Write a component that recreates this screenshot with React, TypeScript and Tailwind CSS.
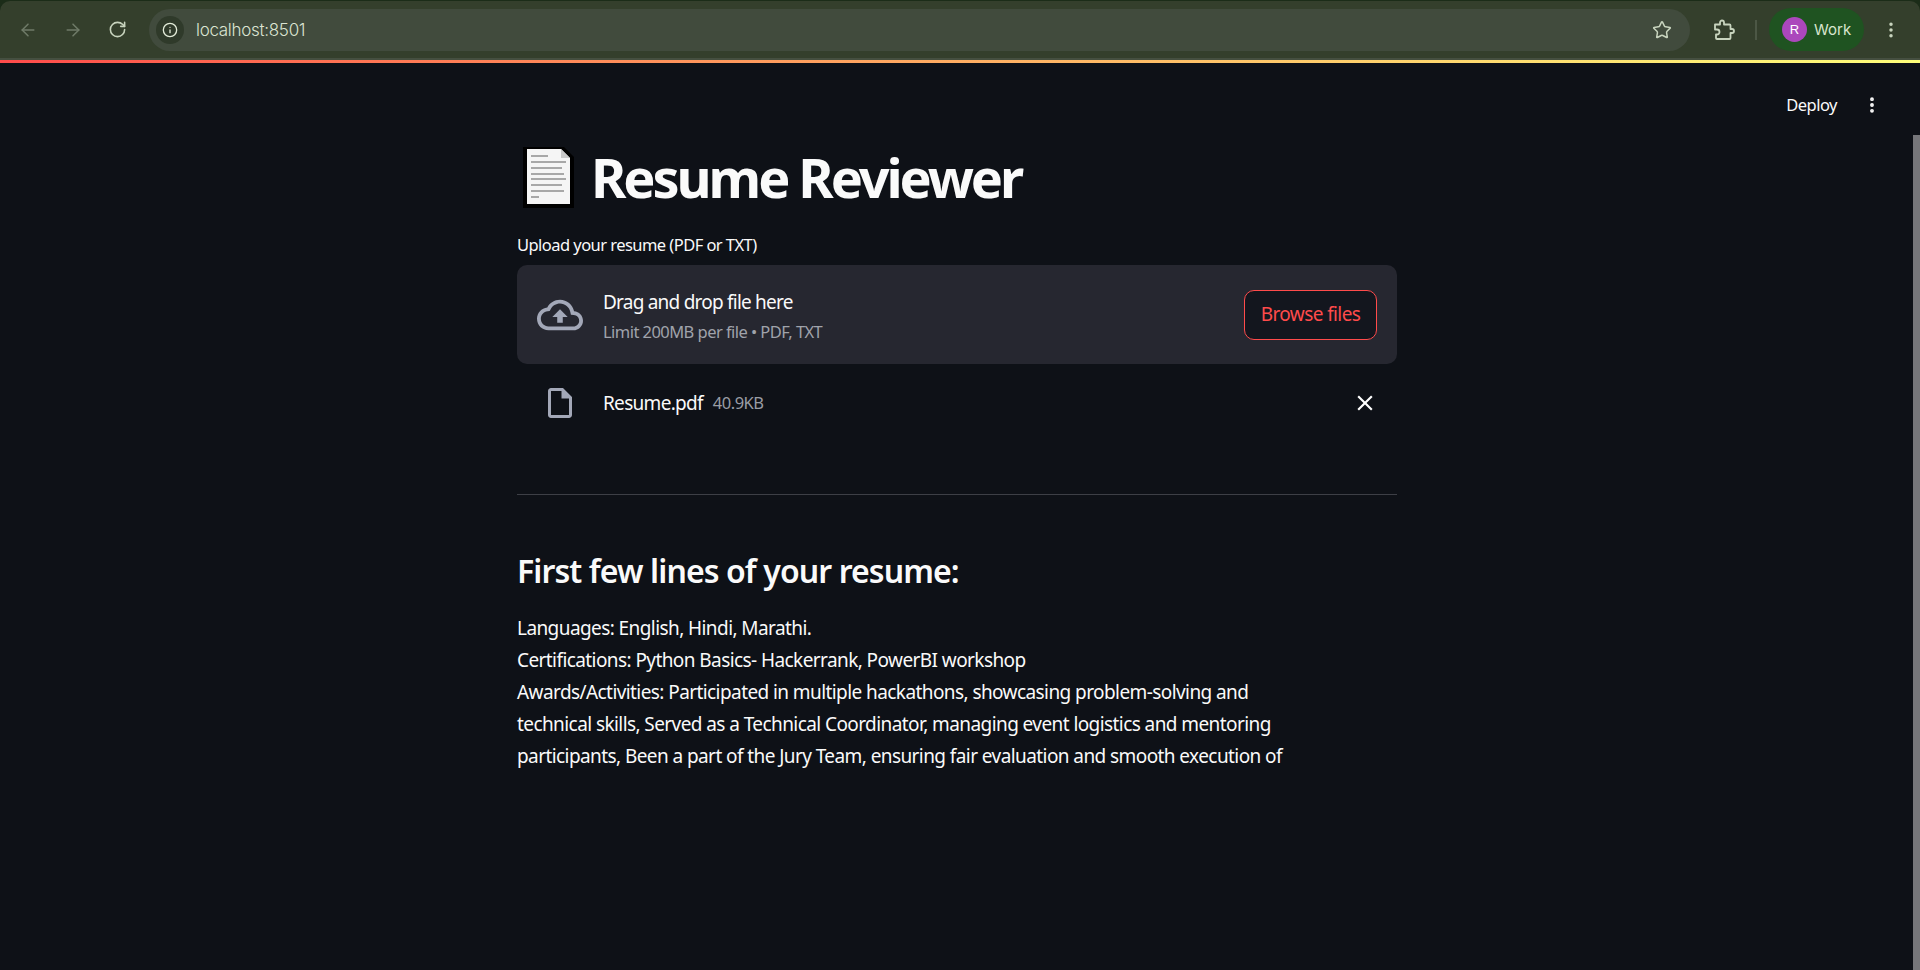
import { ArrowLeft, ArrowRight, RotateCw, Star, EllipsisVertical, Info } from "lucide-react";

const sans = "font-['Noto_Sans',sans-serif]";

function BrowserBar() {
  return (
    <header className="h-[63px] bg-[#1b2c18] shrink-0 flex flex-col">
      <div className="h-[59px] mt-[1px] bg-[#343f2c] border-b-2 border-[#454f40] rounded-t-[10px] flex items-center pl-[18px] pr-[17px] font-['Liberation_Sans',sans-serif]">
        <ArrowLeft size={20} className="text-[#6f7b68] mr-[25px]" strokeWidth={1.8} />
        <ArrowRight size={20} className="text-[#6f7b68] mr-[25px]" strokeWidth={1.8} />
        <RotateCw size={19} className="text-[#c8d4be] mr-[22px]" strokeWidth={2} />
        <div className="w-[1541px] h-[42px] rounded-full bg-[#414b3d] flex items-center pl-[7px] pr-[18px] min-w-0">
          <div className="w-[28px] h-[28px] rounded-full bg-[#2f3a2a] flex items-center justify-center shrink-0">
            <Info size={16} className="text-[#e2ebd8]" strokeWidth={2} />
          </div>
          <span className="ml-[12px] mt-[2px] text-[17px] text-[#dbe4d2] font-['Inter',sans-serif] font-light tracking-[-0.3px]">localhost:8501</span>
          <Star size={20} className="ml-auto text-[#c8d4be]" strokeWidth={1.8} />
        </div>
        {/* Chrome's extensions puzzle piece */}
        <svg width="22" height="22" viewBox="0 0 22 22" fill="none" aria-hidden className="ml-[23px] shrink-0">
          <path d="M2 5.500h5V3.500a2 2 0 0 1 4 0v2h5.500a1 1 0 0 1 1 1V10h1.500a2 2 0 0 1 0 4h-1.500v5a1 1 0 0 1-1 1H4a1 1 0 0 1-1-1v-3.500h1a2.500 2.500 0 0 0 0-5H2z" stroke="#c8d4be" strokeWidth="1.800" strokeLinejoin="round" />
        </svg>
        <div className="w-[2px] h-[20px] bg-[#4c5745] ml-[20px] mr-[12px]" />
        <div className="h-[43px] w-[95px] rounded-full bg-[#1f5321] flex items-center pl-[13px]">
          <div className="w-[25px] h-[25px] rounded-full bg-[#ab47bc] flex items-center justify-center text-[13px] text-white">R</div>
          <span className="ml-[7px] mt-[1px] text-[15px] text-[#d8e5ce] font-['Inter',sans-serif]">Work</span>
        </div>
        <EllipsisVertical size={20} className="ml-[17px] text-[#c8d4be]" strokeWidth={2.2} />
      </div>
      <div className="h-[3px] bg-gradient-to-r from-[#ff4b4b] to-[#ffff7a]" />
    </header>
  );
}

function ResumeIcon() {
  return (
    <svg width="51" height="61" viewBox="0 0 51 61" aria-hidden className="shrink-0">
      <path d="M0 0h41l10 10v51H0z" fill="#000" />
      <path d="M4 2h34l9 9v46H4z" fill="#f5f5f5" />
      <path d="M38 2l9 9h-9z" fill="#c9c9c9" />
      <path d="M8 9h17M8 15h35M8 21h31M8 27h33M8 32h35M8 38h31M8 44h33M8 50h8" stroke="#a8a8a8" strokeWidth="2" />
    </svg>
  );
}

function Uploader() {
  return (
    <div>
      <div className="text-[16.5px] leading-[22px] text-[#fafafa] tracking-[-0.55px]">Upload your resume (PDF or TXT)</div>
      <div className="mt-[9px] h-[99px] rounded-[10px] bg-[#262730] flex items-center px-[20px]">
        <svg width="46" height="46" viewBox="0 0 24 24" fill="#a3a8b8" aria-hidden className="shrink-0">
          <path d="M19.35 10.040C18.670 6.590 15.640 4 12 4 9.110 4 6.600 5.640 5.350 8.040 2.340 8.360 0 10.910 0 14c0 3.310 2.690 6 6 6h13c2.760 0 5-2.240 5-5 0-2.640-2.050-4.780-4.650-4.960zM19 18H6c-2.210 0-4-1.790-4-4 0-2.050 1.530-3.760 3.560-3.970l1.070-.11.5-.95C8.080 7.140 9.940 6 12 6c2.620 0 4.880 1.860 5.390 4.430l.3 1.500 1.530.11c1.560.1 2.780 1.410 2.780 2.960 0 1.650-1.350 3-3 3zM8 13h2.550v3h2.900v-3H16l-4-4z" />
        </svg>
        <div className="ml-[20px] flex-1 pt-[3px]">
          <div className="text-[19px] leading-[30px] text-[#fafafa] tracking-[-0.78px]">Drag and drop file here</div>
          <div className="mt-[1px] text-[16.5px] leading-[28px] text-[#a0a3ab] tracking-[-0.55px]">Limit 200MB per file • PDF, TXT</div>
        </div>
        <button type="button" className="w-[133px] h-[50px] rounded-[10px] border border-[#ff4b4b] bg-[#13161e] text-[19px] text-[#ff4b4b] tracking-[-0.6px]">Browse files</button>
      </div>
      <div className="mt-[16px] h-[46px] flex items-center pl-[25px]">
        <svg width="36" height="36" viewBox="0 0 24 24" fill="#a3a8b8" aria-hidden className="shrink-0">
          <path d="M14 2H6c-1.100 0-1.990.9-1.990 2L4 20c0 1.100.89 2 1.990 2H18c1.100 0 2-.9 2-2V8l-6-6zM6 20V4h7v5h5v11H6z" />
        </svg>
        <span className="ml-[25px] text-[19px] text-[#fafafa] tracking-[-0.7px]">Resume.pdf</span>
        <span className="ml-[10px] text-[16.5px] text-[#9a9da5] tracking-[-0.5px]">40.9KB</span>
        <svg width="26" height="26" viewBox="0 0 24 24" fill="#fff" aria-hidden className="ml-auto mr-[19px] shrink-0">
          <path d="M19 6.410L17.590 5 12 10.590 6.410 5 5 6.410 10.590 12 5 17.590 6.410 19 12 13.410 17.590 19 19 17.590 13.410 12z" />
        </svg>
      </div>
    </div>
  );
}

export default function App() {
  return (
    <div className={`h-[970px] w-full overflow-hidden flex flex-col bg-[#0e1117] ${sans}`}>
      <BrowserBar />
      <div className="relative flex-1 flex justify-center pr-[6px]">
        {/* Deploy toolbar */}
        <div className="absolute top-[30px] right-[38px] flex items-center gap-[25px] text-[#fafafa]">
          <span className="text-[16.5px] tracking-[-0.5px]">Deploy</span>
          <EllipsisVertical size={20} strokeWidth={2.6} />
        </div>
        {/* Scrollbar */}
        <div className="absolute top-[72px] bottom-0 right-0 w-[7px] bg-[#76767a]" />
        <main className="w-[880px]">
          <div className="mt-[79px] flex items-center pl-[6px]">
            <ResumeIcon />
            <h1 className="ml-[17px] text-[54px] leading-[70px] font-bold text-[#fafafa] tracking-[-3.07px]">Resume Reviewer</h1>
          </div>
          <div className="mt-[22px]">
            <Uploader />
          </div>
          <hr className="mt-[68px] border-0 h-px bg-[#3d3f46]" />
          <h3 className="mt-[54px] text-[32px] leading-[44px] font-semibold text-[#fafafa] tracking-[-0.9px]">First few lines of your resume:</h3>
          <p className="mt-[19px] w-[800px] text-[19px] leading-[32px] text-[#fafafa] tracking-[-0.58px]">
            Languages: English, Hindi, Marathi.<br />
            Certifications: Python Basics- Hackerrank, PowerBI workshop<br />
            Awards/Activities: Participated in multiple hackathons, showcasing problem-solving and<br />
            technical skills, Served as a Technical Coordinator, managing event logistics and mentoring<br />
            participants, Been a part of the Jury Team, ensuring fair evaluation and smooth execution of
          </p>
        </main>
      </div>
    </div>
  );
}
